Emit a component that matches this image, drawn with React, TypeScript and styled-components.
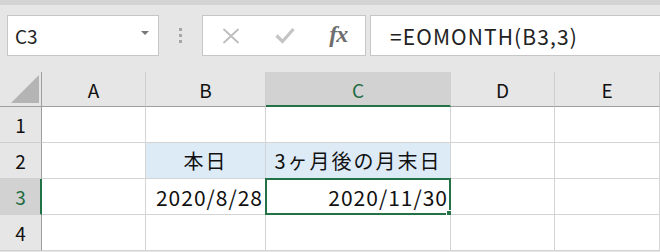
import React from 'react';
import styled, { createGlobalStyle } from 'styled-components';

const GlobalStyle = createGlobalStyle`
  html, body {
    margin: 0;
    padding: 0;
    background: #e6e6e6;
    overflow: hidden;
  }
  * {
    box-sizing: border-box;
  }
`;

const FONT = `'Noto Sans CJK JP', 'Noto Sans', sans-serif`;

const Page = styled.div`
  width: 660px;
  height: 252px;
  background: #e6e6e6;
  display: flex;
  flex-direction: column;
  font-family: ${FONT};
`;

const TopStrip = styled.div`
  height: 5px;
  background: #d4d4d4;
`;

const Toolbar = styled.div`
  display: flex;
  align-items: center;
  height: 67px;
  padding: 10px 0 16px 7px;
`;

const Box = styled.div<{ $width: number }>`
  width: ${({ $width }) => $width}px;
  height: 41px;
  background: #ffffff;
  border: 1px solid #c6c6c6;
  display: flex;
  align-items: center;
  flex-shrink: 0;
`;

const NameBox = styled(Box)`
  justify-content: space-between;
  padding: 0 9px 0 7px;
  font-size: 19px;
  color: #222;
`;

const DropArrow = styled.span`
  width: 0;
  height: 0;
  border-left: 4px solid transparent;
  border-right: 4px solid transparent;
  border-top: 4px solid #777;
  margin-top: -6px;
`;

const Dots = styled.div`
  width: 46px;
  display: flex;
  flex-direction: column;
  align-items: center;
  gap: 3px;
  margin-top: -1px;
`;

const Dot = styled.span`
  width: 3px;
  height: 3px;
  background: #a6a6a6;
`;

const ButtonBox = styled(Box)`
  padding-left: 1px;
`;

const IconSlot = styled.span`
  width: 54px;
  display: flex;
  justify-content: center;
  align-items: center;
`;

const Fx = styled.span`
  font-family: 'Liberation Serif', 'DejaVu Serif', serif;
  font-style: italic;
  font-weight: bold;
  font-size: 24px;
  color: #6e6e6e;
  letter-spacing: -1px;
  margin-top: -3px;
`;

const FormulaBox = styled(Box)`
  margin-left: 4px;
  border-right: none;
  padding-left: 19px;
  font-size: 21px;
  color: #222;
  letter-spacing: 1.1px;
`;

const Sheet = styled.div`
  display: grid;
  grid-template-columns: 42px 104px 120px 185px 104px 105px;
  grid-auto-rows: 36px;
  grid-template-rows: 35px;
  background: #ffffff;
`;

const ColHeader = styled.div<{ $active?: boolean }>`
  display: flex;
  align-items: center;
  justify-content: center;
  background: ${({ $active }) => ($active ? '#d2d2d2' : '#e6e6e6')};
  border-right: 1px solid #cfcfcf;
  border-bottom: ${({ $active }) => ($active ? '2px solid #217346' : '1px solid #9e9e9e')};
  color: ${({ $active }) => ($active ? '#1e6b42' : '#111')};
  font-size: 19px;
  padding-top: ${({ $active }) => ($active ? '1px' : '0')};
`;

const Corner = styled.div`
  background: #e6e6e6;
  border-right: 1px solid #9e9e9e;
  border-bottom: 1px solid #9e9e9e;
  display: flex;
  align-items: flex-end;
  justify-content: flex-end;
  padding: 0 2px 3px 0;
`;

const RowHeader = styled.div<{ $active?: boolean }>`
  display: flex;
  align-items: center;
  justify-content: center;
  background: ${({ $active }) => ($active ? '#d2d2d2' : '#e6e6e6')};
  border-right: ${({ $active }) => ($active ? '2px solid #217346' : '1px solid #9e9e9e')};
  border-bottom: 1px solid #cfcfcf;
  color: ${({ $active }) => ($active ? '#1e6b42' : '#111')};
  font-size: 19px;
  padding-left: ${({ $active }) => ($active ? '1px' : '0')};
`;

const Cell = styled.div<{ $fill?: boolean; $align?: 'left' | 'center' | 'right' }>`
  position: relative;
  display: flex;
  align-items: center;
  justify-content: ${({ $align }) =>
    $align === 'center' ? 'center' : $align === 'right' ? 'flex-end' : 'flex-start'};
  padding: 0 3px 0 3px;
  background: ${({ $fill }) => ($fill ? '#ddebf7' : '#ffffff')};
  border-right: 1px solid #d4d4d4;
  border-bottom: 1px solid #d4d4d4;
  font-size: 20px;
  color: #111;
  white-space: nowrap;
`;

const WideText = styled.span`
  letter-spacing: 2px;
`;

const NumberText = styled.span`
  font-size: 21px;
  letter-spacing: 1px;
  margin-right: -1px;
`;

const Selection = styled.div`
  position: absolute;
  left: -1px;
  top: -1px;
  right: -1px;
  bottom: -1px;
  border: 2px solid #217346;
  pointer-events: none;
`;

const FillHandle = styled.div`
  position: absolute;
  right: -4px;
  bottom: -4px;
  width: 7px;
  height: 7px;
  background: #217346;
  border: 1px solid #ffffff;
  border-right: none;
  border-bottom: none;
`;

const CrossIcon = () => (
  <svg width="18" height="16" viewBox="0 0 18 16">
    <path d="M1.5 1 L16.5 15 M16.5 1 L1.5 15" stroke="#bdbdbd" strokeWidth="1.8" fill="none" />
  </svg>
);

const CheckIcon = () => (
  <svg width="20" height="17" viewBox="0 0 20 17">
    <path d="M1.5 8.5 L7.5 14.5 L18.5 2" stroke="#c4c4c4" strokeWidth="3.2" fill="none" />
  </svg>
);

const CornerTriangle = () => (
  <svg width="28" height="28" viewBox="0 0 28 28">
    <polygon points="28,0 28,28 0,28" fill="#b4b4b4" />
  </svg>
);

const columns = ['A', 'B', 'C', 'D', 'E'];

type Kind = 'wide' | 'number';

type CellData = {
  text?: string;
  fill?: boolean;
  align?: 'left' | 'center' | 'right';
  kind?: Kind;
  selected?: boolean;
};

const rows: CellData[][] = [
  [{}, {}, {}, {}, {}],
  [
    {},
    { text: '本日', fill: true, align: 'center', kind: 'wide' },
    { text: '3ヶ月後の月末日', fill: true, align: 'center', kind: 'wide' },
    {},
    {},
  ],
  [
    {},
    { text: '2020/8/28', align: 'right', kind: 'number' },
    { text: '2020/11/30', align: 'right', kind: 'number', selected: true },
    {},
    {},
  ],
  [{}, {}, {}, {}, {}],
];

const renderText = (cell: CellData) => {
  if (!cell.text) return null;
  if (cell.kind === 'wide') return <WideText>{cell.text}</WideText>;
  if (cell.kind === 'number') return <NumberText>{cell.text}</NumberText>;
  return cell.text;
};

const App: React.FC = () => {
  return (
    <Page>
      <GlobalStyle />
      <TopStrip />
      <Toolbar>
        <NameBox $width={152}>
          <span>C3</span>
          <DropArrow />
        </NameBox>
        <Dots>
          <Dot />
          <Dot />
          <Dot />
        </Dots>
        <ButtonBox $width={164}>
          <IconSlot>
            <CrossIcon />
          </IconSlot>
          <IconSlot>
            <CheckIcon />
          </IconSlot>
          <IconSlot>
            <Fx>fx</Fx>
          </IconSlot>
        </ButtonBox>
        <FormulaBox $width={290}>=EOMONTH(B3,3)</FormulaBox>
      </Toolbar>
      <Sheet>
        <Corner>
          <CornerTriangle />
        </Corner>
        {columns.map((c) => (
          <ColHeader key={c} $active={c === 'C'}>
            {c}
          </ColHeader>
        ))}
        {rows.map((row, r) => (
          <React.Fragment key={r}>
            <RowHeader $active={r === 2}>{r + 1}</RowHeader>
            {row.map((cell, c) => (
              <Cell key={c} $fill={cell.fill} $align={cell.align}>
                {renderText(cell)}
                {cell.selected && (
                  <Selection>
                    <FillHandle />
                  </Selection>
                )}
              </Cell>
            ))}
          </React.Fragment>
        ))}
      </Sheet>
    </Page>
  );
};

export default App;
